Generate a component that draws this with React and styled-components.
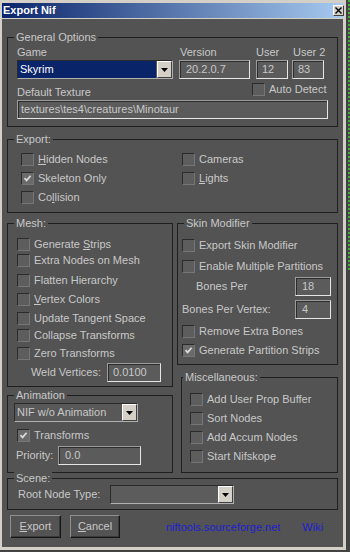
import React from "react";
import styled, { createGlobalStyle } from "styled-components";

const Global = createGlobalStyle`
  html, body { margin: 0; padding: 0; background: #444444; }
  body { font-family: "Liberation Sans", Arial, sans-serif; font-size: 11px; }
`;

const Page = styled.div`
  width: 350px;
  height: 552px;
  display: flex;
  background: #444444;
`;

const Window = styled.div`
  width: 347px;
  height: 551px;
  flex: none;
  box-sizing: border-box;
  padding: 3px 3px 3px 2px;
  background: #d4d0c8;
  border-right: 1px solid #404040;
  border-bottom: 1px solid #404040;
  display: flex;
  flex-direction: column;
`;

const Edge = styled.div`
  flex: none;
  width: 3px;
  height: 270px;
  margin-left: 1px;
  background: repeating-linear-gradient(180deg, #3fae3f 0 2px, #4a4a4a 2px 4px);
`;

const TitleBar = styled.div`
  height: 15px;
  flex: none;
  margin-bottom: 1px;
  padding-left: 1px;
  background: linear-gradient(90deg, #0a246a 0%, #a6caf0 100%);
  display: flex;
  align-items: center;
  justify-content: space-between;
`;

const Title = styled.div`
  color: #ffffff;
  font-weight: bold;
  font-size: 11px;
  line-height: 15px;
`;

const CloseBtn = styled.div`
  width: 11px;
  height: 11px;
  box-sizing: border-box;
  margin-right: -1px;
  background: #d4d0c8;
  border: 1px solid;
  border-color: #ffffff #404040 #404040 #ffffff;
  display: flex;
  align-items: center;
  justify-content: center;
`;

const Client = styled.div`
  flex: 1;
  background: #535353;
  color: #c8c8c8;
  padding: 18px 0 0 5px;
  display: flex;
  flex-direction: column;
`;

const Group = styled.div`
  box-sizing: border-box;
  border: 1px solid #1f1f1f;
  width: ${(p) => p.$w}px;
  ${(p) => (p.$h ? `height: ${p.$h}px;` : "")}
  margin-top: ${(p) => p.$mt || 0}px;
  margin-left: ${(p) => p.$ml || 0}px;
  display: flex;
  flex-direction: column;
`;

const Legend = styled.div`
  align-self: flex-start;
  height: 13px;
  line-height: 13px;
  margin: -7px 0 0 ${(p) => p.$ml ?? 6}px;
  padding: 0 2px;
  background: #535353;
  white-space: nowrap;
`;

const Label = styled.div`
  height: 13px;
  line-height: 13px;
  white-space: nowrap;
  margin-top: ${(p) => p.$mt || 0}px;
  margin-left: ${(p) => p.$ml || 0}px;
`;

const U = styled.span`
  text-decoration: underline;
  text-underline-offset: 1px;
`;

const Edit = styled.div`
  box-sizing: border-box;
  height: 19px;
  width: ${(p) => p.$w}px;
  flex: none;
  background: #5b5b5b;
  border: 1px solid;
  border-color: #9c9c9c #e6e6e6 #e6e6e6 #9c9c9c;
  box-shadow: inset 1px 1px 0 #2c2c2c;
  padding-left: ${(p) => p.$pl ?? 5}px;
  line-height: 17px;
  color: #c8c8c8;
  white-space: nowrap;
  overflow: hidden;
`;

const ComboBox = styled.div`
  box-sizing: border-box;
  height: 19px;
  width: ${(p) => p.$w}px;
  flex: none;
  display: flex;
  border: 1px solid;
  border-color: #2a2a2a #b0b0b0 #b0b0b0 #2a2a2a;
  background: ${(p) => p.$bg || "#585858"};
`;

const ComboText = styled.div`
  flex: 1;
  background: ${(p) => p.$bg || "transparent"};
  color: ${(p) => p.$color || "#c8c8c8"};
  padding-left: 2px;
  line-height: 17px;
  white-space: nowrap;
  overflow: hidden;
  margin-right: 1px;
`;

const DropBtn = styled.div`
  width: 15px;
  flex: none;
  box-sizing: border-box;
  background: #d4d0c8;
  border: 1px solid;
  border-color: #ffffff #404040 #404040 #ffffff;
  display: flex;
  align-items: center;
  justify-content: center;
`;

const Box = styled.span`
  width: 13px;
  height: 13px;
  flex: none;
  box-sizing: border-box;
  border: 1px solid;
  border-color: #2b2b2b #767676 #767676 #2b2b2b;
  background: ${(p) => (p.$on ? "#6a6a6a" : "#5d5d5d")};
  display: flex;
  align-items: center;
  justify-content: center;
`;

const Check = styled.div`
  display: flex;
  align-items: center;
  gap: 4px;
  height: 13px;
  line-height: 13px;
  white-space: nowrap;
  margin-top: ${(p) => p.$mt || 0}px;
  margin-left: ${(p) => p.$ml || 0}px;
`;

/* General */
const GenBody = styled.div`
  padding: 2px 0 7px 9px;
  display: flex;
  flex-direction: column;
`;

const TopGrid = styled.div`
  display: grid;
  grid-template-columns: 162px 77px 36px 32px;
`;

const Field = styled.div`
  display: flex;
  flex-direction: column;
  gap: 1px;
`;

const RowB = styled.div`
  display: grid;
  grid-template-columns: 235px auto;
  margin-top: 4px;
  height: 16px;
`;

const Spaced = styled.div`
  margin-top: ${(p) => p.$mt || 0}px;
`;

/* Export */
const ExportBody = styled.div`
  display: grid;
  grid-template-columns: 161px auto;
  grid-template-rows: repeat(3, 13px);
  grid-auto-flow: column;
  row-gap: 6px;
  padding: 7px 0 8px 13px;
`;

/* Columns */
const Columns = styled.div`
  display: flex;
  gap: 4px;
  margin-top: 10px;
`;

const Col = styled.div`
  display: flex;
  flex-direction: column;
`;

const Body = styled.div`
  display: flex;
  flex-direction: column;
  padding-left: ${(p) => p.$pl || 0}px;
  padding-right: ${(p) => p.$pr || 0}px;
`;

const ValueRow = styled.div`
  display: flex;
  align-items: center;
  justify-content: ${(p) => p.$justify || "space-between"};
  gap: ${(p) => p.$gap || 0}px;
  margin-top: ${(p) => p.$mt || 0}px;
  padding-right: ${(p) => p.$pr || 0}px;
`;

const PriorityRow = styled.div`
  display: grid;
  grid-template-columns: 42px 83px;
  align-items: center;
  margin-top: 4px;
  padding-left: 2px;
`;

const SceneBody = styled.div`
  display: grid;
  grid-template-columns: 92px 124px;
  align-items: center;
  padding: 0 0 5px 10px;
`;

const Footer = styled.div`
  display: flex;
  align-items: center;
  margin-top: 5px;
`;

const Button = styled.div`
  box-sizing: border-box;
  width: ${(p) => p.$w}px;
  height: 23px;
  margin-left: ${(p) => p.$ml || 0}px;
  border: 1px solid;
  border-color: #8e8e8e #151515 #151515 #8e8e8e;
  box-shadow: inset -1px -1px 0 #3a3a3a;
  display: flex;
  align-items: center;
  justify-content: center;
  line-height: 13px;
`;

const Link = styled.div`
  color: #1e1ed2;
  margin-left: ${(p) => p.$ml || 0}px;
  line-height: 13px;
  margin-top: 1px;
`;

const Arrow = () => (
  <svg width="7" height="4" viewBox="0 0 7 4">
    <path d="M0 0H7L3.5 4Z" fill="#000" />
  </svg>
);

const CheckMark = () => (
  <svg width="9" height="9" viewBox="0 0 9 9">
    <path d="M1.5 4.2 L3.6 6.4 L7.6 1.8" stroke="#dcdcdc" strokeWidth="1.7" fill="none" />
  </svg>
);

const CB = ({ on, children, mt, ml }) => (
  <Check $mt={mt} $ml={ml}>
    <Box $on={on}>{on && <CheckMark />}</Box>
    <span>{children}</span>
  </Check>
);

const Combo = ({ w, text, bg, color, boxBg }) => (
  <ComboBox $w={w} $bg={boxBg}>
    <ComboText $bg={bg} $color={color}>{text}</ComboText>
    <DropBtn>
      <Arrow />
    </DropBtn>
  </ComboBox>
);

const meshRows = [
  { mt: 8, label: <>Generate <U>S</U>trips</> },
  { mt: 3, label: "Extra Nodes on Mesh" },
  { mt: 7, label: "Flatten Hierarchy" },
  { mt: 6, label: <><U>V</U>ertex Colors</> },
  { mt: 6, label: "Update Tangent Space" },
  { mt: 4, label: "Collapse Transforms" },
  { mt: 5, label: "Zero Transforms" },
];

const miscRows = [
  { mt: 9, label: "Add User Prop Buffer" },
  { mt: 6, label: "Sort Nodes" },
  { mt: 6, label: "Add Accum Nodes" },
  { mt: 6, label: "Start Nifskope" },
];

export default function App() {
  return (
    <>
      <Global />
      <Page>
        <Window>
          <TitleBar>
            <Title>Export Nif</Title>
            <CloseBtn>
              <svg width="7" height="7" viewBox="0 0 7 7">
                <path d="M0.5 0.5L6.5 6.5M6.5 0.5L0.5 6.5" stroke="#000" strokeWidth="1.4" />
              </svg>
            </CloseBtn>
          </TitleBar>
          <Client>
            <Group $w={331}>
              <Legend>General Options</Legend>
              <GenBody>
                <TopGrid>
                  <Field>
                    <Label>Game</Label>
                    <Combo w={156} text="Skyrim" bg="#0a246a" color="#ffffff" />
                  </Field>
                  <Field>
                    <Label $ml={1}>Version</Label>
                    <Edit $w={71} $pl={6}>20.2.0.7</Edit>
                  </Field>
                  <Field>
                    <Label>User</Label>
                    <Edit $w={32}>12</Edit>
                  </Field>
                  <Field>
                    <Label $ml={1}>User 2</Label>
                    <Edit $w={32}>83</Edit>
                  </Field>
                </TopGrid>
                <RowB>
                  <Label $mt={3}>Default Texture</Label>
                  <CB>Auto Detect</CB>
                </RowB>
                <Spaced $mt={1}>
                  <Edit $w={311} $pl={3}>textures\tes4\creatures\Minotaur</Edit>
                </Spaced>
              </GenBody>
            </Group>

            <Group $w={331} $mt={12}>
              <Legend>Export:</Legend>
              <ExportBody>
                <CB><U>H</U>idden Nodes</CB>
                <CB on>Skeleton Only</CB>
                <CB>Co<U>l</U>lision</CB>
                <CB>Cameras</CB>
                <CB><U>L</U>ights</CB>
              </ExportBody>
            </Group>

            <Columns>
              <Col>
                <Group $w={166} $h={164}>
                  <Legend>Mesh:</Legend>
                  <Body $pl={9}>
                    {meshRows.map((r, i) => (
                      <CB key={i} mt={r.mt}>{r.label}</CB>
                    ))}
                    <ValueRow $justify="flex-end" $gap={6} $pr={11} $mt={3}>
                      <Label>Weld Vertices:</Label>
                      <Edit $w={54}>0.0100</Edit>
                    </ValueRow>
                  </Body>
                </Group>
                <Group $w={166} $h={78} $mt={8}>
                  <Legend>Animation</Legend>
                  <Body $pl={6}>
                    <Spaced $mt={1}>
                      <Combo w={124} text="NIF w/o Animation" />
                    </Spaced>
                    <CB on mt={7} ml={3}>Transforms</CB>
                    <PriorityRow>
                      <Label>Priority:</Label>
                      <Edit $w={83} $pl={6}>0.0</Edit>
                    </PriorityRow>
                  </Body>
                </Group>
              </Col>
              <Col>
                <Group $w={161} $h={142}>
                  <Legend>Skin Modifier</Legend>
                  <Body $pl={4} $pr={6}>
                    <CB mt={9}>Export Skin Modifier</CB>
                    <CB mt={8}>Enable Multiple Partitions</CB>
                    <ValueRow $mt={4}>
                      <Label $ml={14}>Bones Per</Label>
                      <Edit $w={36} $pl={6}>18</Edit>
                    </ValueRow>
                    <ValueRow $mt={4}>
                      <Label>Bones Per Vertex:</Label>
                      <Edit $w={36} $pl={6}>4</Edit>
                    </ValueRow>
                    <CB mt={6}>Remove Extra Bones</CB>
                    <CB on mt={6}>Generate Partition Strips</CB>
                  </Body>
                </Group>
                <Group $w={157} $h={96} $mt={12} $ml={4}>
                  <Legend $ml={1}>Miscellaneous:</Legend>
                  <Body $pl={8}>
                    {miscRows.map((r, i) => (
                      <CB key={i} mt={r.mt}>{r.label}</CB>
                    ))}
                  </Body>
                </Group>
              </Col>
            </Columns>

            <Group $w={331} $mt={5}>
              <Legend>Scene:</Legend>
              <SceneBody>
                <Label>Root Node Type:</Label>
                <Combo w={124} text="" boxBg="#5c5c5c" />
              </SceneBody>
            </Group>

            <Footer>
              <Button $w={51} $ml={3}><span><U>E</U>xport</span></Button>
              <Button $w={50} $ml={9}><span><U>C</U>ancel</span></Button>
              <Link $ml={46}>niftools.sourceforge.net</Link>
              <Link $ml={22}>Wiki</Link>
            </Footer>
          </Client>
        </Window>
        <Edge />
      </Page>
    </>
  );
}
